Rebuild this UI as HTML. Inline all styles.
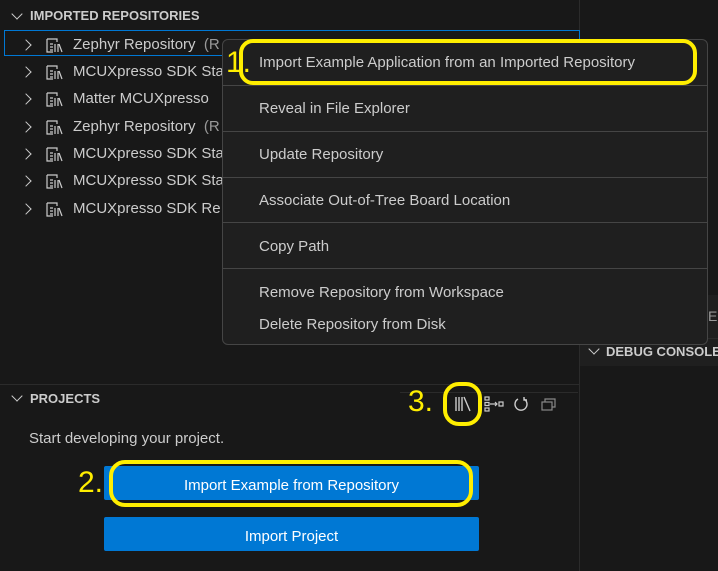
<!DOCTYPE html><html><head><style>
body{margin:0;width:718px;height:571px;background:#181818;position:relative;overflow:hidden;font-family:"Liberation Sans",sans-serif;color:#cccccc}
.a{position:absolute;white-space:nowrap}
.t{font-size:15px}
.hd{font-size:13px;font-weight:bold;color:#cccccc}
.chev{position:absolute;width:7px;height:7px;border-right:1.5px solid #ccc;border-bottom:1.5px solid #ccc}
.mi{position:absolute;left:259px;font-size:15px;color:#cccccc}
.sep{position:absolute;left:223px;width:484px;height:1px;background:#454545}
.y{position:absolute;border:4px solid #ffee00;box-sizing:border-box}
.yt{position:absolute;color:#ffee00;font-size:30px}
.btn{position:absolute;left:104px;width:375px;height:34px;background:#0078d4;color:#fff;font-size:15px;text-align:center;line-height:40px;border-radius:2px}
</style></head><body>
<div class="a" style="left:579px;top:0;width:1px;height:571px;background:#2b2b2b"></div>
<div class="a" style="left:580px;top:295px;width:138px;height:43px;background:#1f1f1f"></div>
<div class="a" style="left:580px;top:338px;width:138px;height:27px;background:#1f1f1f;border-top:1px solid #2b2b2b"></div>
<div class="chev" style="left:590px;top:345px;transform:rotate(45deg)"></div>
<div class="a hd" style="left:606px;top:344px">DEBUG CONSOLE</div>
<div class="a" style="left:708px;top:308px;font-size:14px;color:#999">E</div>

<div class="chev" style="left:13px;top:10px;transform:rotate(45deg)"></div>
<div class="a hd" style="left:30px;top:8px">IMPORTED REPOSITORIES</div>
<div class="a" style="left:4px;top:30px;width:576px;height:26px;border:1px solid #0078d4;box-sizing:border-box"></div>

<div id="rows"></div>
<script>
var r=[["Zephyr Repository",45,"(R"],["MCUXpresso SDK Sta",72],["Matter MCUXpresso",99],["Zephyr Repository",127,"(R"],["MCUXpresso SDK Sta",154],["MCUXpresso SDK Sta",181],["MCUXpresso SDK Re",209]];
var h="";r.forEach(function(x){var y=x[1];
h+='<div class="chev" style="left:22px;top:'+(y-4)+'px;transform:rotate(-45deg)"></div>';
h+='<svg class="a" style="left:46px;top:'+(y-9)+'px" width="18" height="18" viewBox="0 0 18 18" fill="none" stroke="#ccc" stroke-width="1.2"><path d="M1 3h10v3M1 3v13h6M4 8h3M4 11h3M4 14h3M9 8v8M12 8v8M13 8l3 8"/></svg>';
h+='<div class="a t" style="left:73px;top:'+(y-9)+'px">'+x[0]+(x[2]?' <span style="color:#999">&nbsp;'+x[2]+'</span>':'')+'</div>';});
document.getElementById("rows").innerHTML=h;
</script>

<div class="a" style="left:0;top:384px;width:579px;height:1px;background:#2b2b2b"></div>
<div class="chev" style="left:13px;top:392px;transform:rotate(45deg)"></div>
<div class="a hd" style="left:30px;top:391px">PROJECTS</div>
<div class="a" style="left:400px;top:392px;width:178px;height:1px;background:#2b2b2b"></div>
<svg class="a" style="left:454px;top:396px" width="18" height="16" viewBox="0 0 18 16" fill="none" stroke="#ccc" stroke-width="1.4"><path d="M2 1v14M5 1v14M8 1v14M10 1l6 14"/></svg>
<svg class="a" style="left:484px;top:396px" width="20" height="16" viewBox="0 0 20 16" fill="none" stroke="#ccc" stroke-width="1.2"><rect x="1" y="1" width="4" height="3"/><rect x="1" y="6.5" width="4" height="3"/><rect x="1" y="12" width="4" height="3"/><path d="M6 8h7M11 6l2 2-2 2"/><rect x="15" y="6" width="4" height="4"/></svg>
<svg class="a" style="left:513px;top:396px" width="16" height="16" viewBox="0 0 16 16" fill="none" stroke="#ccc" stroke-width="1.4"><path d="M5 3a6 6 0 1 0 6 0M11 1v3h3"/></svg>
<svg class="a" style="left:541px;top:397px" width="16" height="15" viewBox="0 0 16 15" fill="none" stroke="#888" stroke-width="1.2"><rect x="1" y="5" width="10" height="8"/><path d="M4 5V2h10v8h-3"/></svg>
<div class="a t" style="left:29px;top:430px">Start developing your project.</div>
<div class="btn" style="top:466px">Import Example from Repository</div>
<div class="btn" style="top:517px">Import Project</div>

<div class="a" style="left:222px;top:39px;width:486px;height:306px;background:#1f1f1f;border:1px solid #454545;border-radius:6px;box-sizing:border-box"></div>
<div class="mi" style="top:54px">Import Example Application from an Imported Repository</div>
<div class="sep" style="top:85px"></div>
<div class="mi" style="top:100px">Reveal in File Explorer</div>
<div class="sep" style="top:131px"></div>
<div class="mi" style="top:146px">Update Repository</div>
<div class="sep" style="top:177px"></div>
<div class="mi" style="top:192px">Associate Out-of-Tree Board Location</div>
<div class="sep" style="top:222px"></div>
<div class="mi" style="top:238px">Copy Path</div>
<div class="sep" style="top:268px"></div>
<div class="mi" style="top:284px">Remove Repository from Workspace</div>
<div class="mi" style="top:316px">Delete Repository from Disk</div>

<div class="y" style="left:239px;top:39px;width:458px;height:46px;border-radius:14px"></div>
<div class="yt" style="left:226px;top:46px">1.</div>
<div class="y" style="left:109px;top:460px;width:364px;height:47px;border-radius:16px"></div>
<div class="yt" style="left:78px;top:466px">2.</div>
<div class="y" style="left:443px;top:382px;width:39px;height:44px;border-radius:16px"></div>
<div class="yt" style="left:408px;top:385px">3.</div>
</body></html>
